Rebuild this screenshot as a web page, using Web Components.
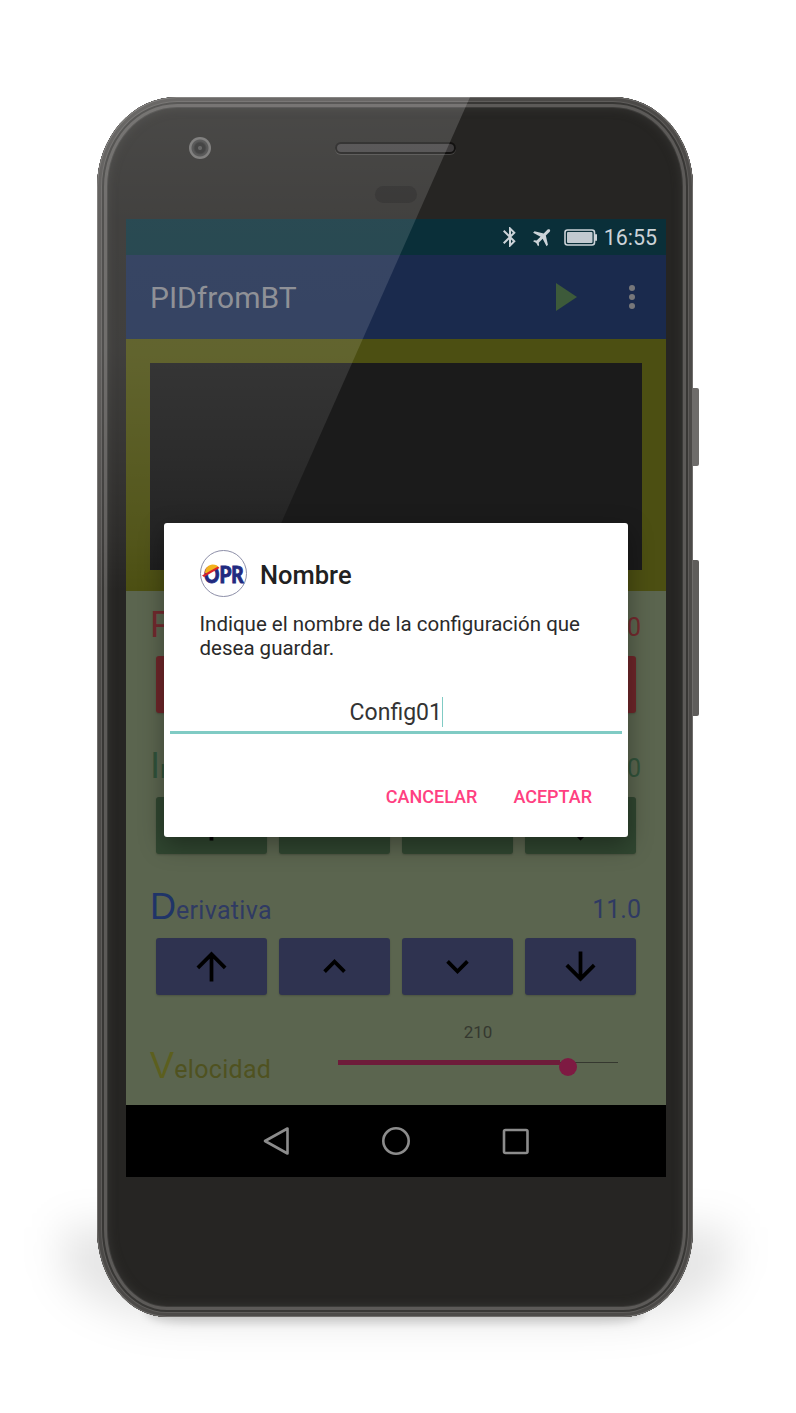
<!DOCTYPE html>
<html lang="es">
<head>
<meta charset="utf-8">
<title>PIDfromBT</title>
<style>
  html, body { margin: 0; padding: 0; background: #fff; }
  body { width: 796px; height: 1413px; overflow: hidden; font-family: Roboto, sans-serif; }
</style>
</head>
<body>
<phone-device>
  <status-strip></status-strip>
  <title-strip title-text="PIDfromBT"></title-strip>
  <chart-panel></chart-panel>
  <control-panel>
    <gain-row letter="P" rest="" value="0" tint="#732a2e" fill="#6e2629"></gain-row>
    <gain-row letter="I" rest="ntegral" value="0" tint="#31523a" fill="#304630"></gain-row>
    <gain-row letter="D" rest="erivativa" value="11.0" tint="#2f3a63" lead="#1f3468" fill="#2f3350"></gain-row>
    <speed-row></speed-row>
  </control-panel>
  <nav-strip></nav-strip>
  <name-dialog slot="dialog"></name-dialog>
</phone-device>

<script>
class phoneDevice extends HTMLElement {
  constructor() {
    super();
    const template = document.createElement('template');
    template.innerHTML = `
      <style>
        :host { display: block; position: relative; width: 596px; height: 1220px; margin: 97px 0 0 97px; }
        .shadow {
          position: absolute; left: -34px; right: -36px; top: 1130px; bottom: -4px;
          border-radius: 0 0 130px 130px / 0 0 60px 60px;
          background: rgba(0,0,0,.1); filter: blur(20px);
        }
        .shadow.near {
          left: 50px; right: 50px; top: 1200px; bottom: -6px;
          border-radius: 0 0 40px 40px / 0 0 10px 10px;
          background: rgba(0,0,0,.16); filter: blur(4px);
        }
        .key { position: absolute; left: 594px; width: 8px; background: #6e6c6a; border-radius: 0 2px 2px 0; }
        .key.power { top: 291px; height: 78px; }
        .key.volume { top: 463px; height: 156px; background: #5f5d5b; }
        .shell {
          position: relative; box-sizing: border-box; height: 100%;
          padding: 0 27px 0 29px;
          border-radius: 80px 80px 70px 70px / 90px 90px 88px 88px;
          background: #262523;
          overflow: hidden;
          box-shadow:
            inset 0 0 0 1px #6f6d6b, inset 0 0 0 4px #4c4a48, inset 0 0 0 5px #5e5c5a,
            inset 0 0 0 7px #383735, inset 0 0 0 10px #5c5a58, inset 0 0 0 11px #3c3b39,
            inset 0 0 10px 11px #363533;
        }
        .bezel {
          display: grid; box-sizing: border-box; height: 122px; padding-top: 40px;
          margin: 0 -27px 0 -29px;
          grid-template-columns: 92px 22px 124px 121px 1fr;
          grid-template-rows: 22px 17px; row-gap: 27px;
        }
        .camera {
          grid-column: 2; width: 22px; height: 22px; border-radius: 50%;
          background: radial-gradient(circle, #4c4c4c 0 1.5px, #242424 2.5px 5px, #3d3d3d 7px 8px, #6b6a69 9px 11px);
        }
        .speaker {
          grid-column: 4; align-self: center; height: 12px; box-sizing: border-box;
          border-radius: 6px; border: 2px solid #121110; background: #3d3b3c;
          box-shadow: 0 1px 0 rgba(255,255,255,.14);
        }
        .sensor { grid-column: 4; grid-row: 2; justify-self: center; width: 42px; height: 17px; border-radius: 9px; background: #1c1b1a; }
        .screen { display: flex; flex-direction: column; height: 958px; position: relative; }
        .glare {
          position: absolute; inset: 0; pointer-events: none;
          clip-path: polygon(0 0, 373px 0, 154px 494px, 0 494px);
          background: linear-gradient(to bottom,
            rgba(255,255,255,.17) 0, rgba(255,255,255,.13) 122px, rgba(255,255,255,.12) 250px,
            rgba(255,255,255,.04) 440px, rgba(255,255,255,0) 494px);
        }
      </style>
      <div class="shadow"></div>
      <div class="shadow near"></div>
      <div class="key power"></div>
      <div class="key volume"></div>
      <div class="shell">
        <div class="bezel">
          <div class="camera"></div>
          <div class="speaker"></div>
          <div class="sensor"></div>
        </div>
        <div class="screen"><slot></slot></div>
        <div class="glare"></div>
        <slot name="dialog"></slot>
      </div>`;
    this.attachShadow({ mode: 'open' });
    this.shadowRoot.appendChild(template.content.cloneNode(true));
  }
}
customElements.define('phone-device', phoneDevice);

class statusStrip extends HTMLElement {
  constructor() {
    super();
    this.attachShadow({ mode: 'open' });
    this.shadowRoot.innerHTML = `
      <style>
        :host { display: flex; align-items: center; justify-content: flex-end; height: 36px; background: #0a2f39; color: #ccd3d8; padding-right: 9px; }
        svg { display: block; fill: currentColor; }
        .bt { margin-right: 9px; }
        .plane { margin-right: 9px; }
        .battery { margin-right: 7px; }
        span { font: 400 21.4px Roboto, sans-serif; }
      </style>
      <svg class="bt" width="24" height="24" viewBox="0 0 24 24"><path d="M17.71 7.71L12 2h-1v7.59L6.41 5 5 6.41 10.59 12 5 17.59 6.41 19 11 14.41V22h1l5.71-5.71-4.3-4.29 4.3-4.29zM13 5.83l1.88 1.88L13 9.59V5.83zm1.88 10.46L13 18.17v-3.76l1.88 1.88z"/></svg>
      <svg class="plane" width="24" height="24" viewBox="0 0 24 24"><path transform="rotate(45 12 12)" d="M21 16v-2l-8-5V3.5c0-.83-.67-1.5-1.5-1.5S10 2.67 10 3.5V9l-8 5v2l8-2.5V19l-2 1.5V22l3.5-1 3.5 1v-1.5L13 19v-5.5l8 2.5z"/></svg>
      <svg class="battery" width="33" height="17" viewBox="0 0 33 17"><rect x="1" y="1" width="29.5" height="15" rx="2.5" fill="none" stroke="currentColor" stroke-width="1.6"/><rect x="3" y="3" width="25.5" height="11" rx="1" opacity=".95"/><rect x="31" y="5" width="2" height="7" rx="1"/></svg>
      <span>16:55</span>`;
  }
}
customElements.define('status-strip', statusStrip);

class titleStrip extends HTMLElement {
  constructor() {
    super();
    this.attachShadow({ mode: 'open' });
    this.shadowRoot.innerHTML = `
      <style>
        :host { display: flex; align-items: center; height: 84px; background: #1a2a4d; padding: 0 24px; }
        h1 { flex: 1; margin: 0; font: 400 30px Roboto, sans-serif; color: #7f8188; }
        svg { display: block; }
        .play { margin-right: 52px; }
        .more { margin-right: 7px; }
      </style>
      <h1></h1>
      <svg class="play" width="21" height="28" viewBox="0 0 21 28"><path d="M0 0l21 14L0 28z" fill="#3d5a3a"/></svg>
      <svg class="more" width="6" height="24" viewBox="0 0 6 24" fill="#77777a"><circle cx="3" cy="3" r="3"/><circle cx="3" cy="12" r="3"/><circle cx="3" cy="21" r="3"/></svg>`;
    this.shadowRoot.querySelector('h1').textContent = this.getAttribute('title-text');
  }
}
customElements.define('title-strip', titleStrip);

class chartPanel extends HTMLElement {
  constructor() {
    super();
    this.attachShadow({ mode: 'open' });
    this.shadowRoot.innerHTML = `
      <style>
        :host { display: block; box-sizing: border-box; height: 252px; padding: 24px 24px 21px; background: #4c4f12; }
        div { height: 100%; background: #1b1b1b; }
      </style>
      <div></div>`;
  }
}
customElements.define('chart-panel', chartPanel);

class controlPanel extends HTMLElement {
  constructor() {
    super();
    this.attachShadow({ mode: 'open' });
    this.shadowRoot.innerHTML = `
      <style>
        :host { display: block; box-sizing: border-box; height: 514px; padding-top: 13px; background: #5b654f; }
      </style>
      <slot></slot>`;
  }
}
customElements.define('control-panel', controlPanel);

const stepIcons = [
  'M4 12l1.41 1.41L11 7.83V20h2V7.83l5.58 5.59L20 12l-8-8-8 8z',
  'M12 8l-6 6 1.41 1.41L12 10.83l4.59 4.58L18 14z',
  'M16.59 8.59L12 13.17 7.41 8.59 6 10l6 6 6-6z',
  'M20 12l-1.41-1.41L13 16.17V4h-2v12.17l-5.58-5.59L4 12l8 8 8-8z'
];

class gainRow extends HTMLElement {
  constructor() {
    super();
    this.attachShadow({ mode: 'open' });
    const tint = this.getAttribute('tint');
    const lead = this.getAttribute('lead') || tint;
    const fill = this.getAttribute('fill');
    this.shadowRoot.innerHTML = `
      <style>
        :host { display: block; height: 141px; }
        .head { display: flex; align-items: baseline; justify-content: space-between; height: 52px; box-sizing: border-box; padding: 0 25px 0 24px; color: ${tint}; font: 400 25px Roboto, sans-serif; }
        .lead { font: 400 36px "Liberation Sans", sans-serif; color: ${lead}; }
        .name { letter-spacing: .3px; }
        .num { position: relative; top: -1px; }
        .steps { display: grid; grid-template-columns: repeat(4, 111px); gap: 12px; padding-left: 30px; }
        .steps div { display: flex; align-items: center; justify-content: center; height: 57px; background: ${fill}; border-radius: 3px; box-shadow: 0 1px 2px rgba(0,0,0,.18); }
        svg { display: block; fill: #000; }
      </style>
      <div class="head">
        <span><span class="lead">${this.getAttribute('letter')}</span><span class="name">${this.getAttribute('rest')}</span></span>
        <span class="num">${this.getAttribute('value')}</span>
      </div>
      <div class="steps">
        ${stepIcons.map((d) => `<div><svg width="45" height="45" viewBox="0 0 24 24"><path d="${d}"/></svg></div>`).join('')}
      </div>`;
  }
}
customElements.define('gain-row', gainRow);

class speedRow extends HTMLElement {
  constructor() {
    super();
    this.attachShadow({ mode: 'open' });
    this.shadowRoot.innerHTML = `
      <style>
        :host { display: flex; align-items: flex-end; height: 72px; margin-top: 1px; padding: 0 0 0 24px; font-family: Roboto, sans-serif; }
        .label { width: 188px; padding-bottom: 13px; color: #4f5220; font-size: 25px; letter-spacing: .3px; }
        .lead { font: 400 36px "Liberation Sans", sans-serif; color: #5c5f1e; }
        .slider { position: relative; width: 280px; height: 72px; }
        .value { display: block; text-align: center; font-size: 17px; line-height: 20px; color: #35382f; margin-top: -6px; }
        .rail { position: absolute; left: 0; right: 0; top: 34px; height: 1px; background: #35382f; }
        .done { position: absolute; left: 0; width: 222px; top: 32px; height: 5px; background: #6e1c3a; }
        .thumb { position: absolute; left: 221px; top: 37px; width: 18px; height: 18px; margin-top: -7px; border-radius: 50%; background: #7e1a42; }
      </style>
      <div class="label"><span class="lead">V</span>elocidad</div>
      <div class="slider">
        <span class="value">210</span>
        <div class="rail"></div><div class="done"></div><div class="thumb"></div>
      </div>`;
  }
}
customElements.define('speed-row', speedRow);

class navStrip extends HTMLElement {
  constructor() {
    super();
    this.attachShadow({ mode: 'open' });
    this.shadowRoot.innerHTML = `
      <style>
        :host { display: flex; align-items: center; justify-content: center; gap: 91px; height: 72px; background: #000; }
        svg { display: block; fill: none; stroke: #8c8c8c; stroke-width: 2.6; stroke-linejoin: round; }
      </style>
      <svg width="28" height="30" viewBox="0 0 28 30"><path d="M24.500 2.500v25L2 15z"/></svg>
      <svg width="28" height="30" viewBox="0 0 28 30"><circle cx="14" cy="15" r="12.7"/></svg>
      <svg width="28" height="30" viewBox="0 0 28 30"><rect x="3" y="4" width="23.5" height="23" rx="1.5"/></svg>`;
  }
}
customElements.define('nav-strip', navStrip);

class oprLogo extends HTMLElement {
  constructor() {
    super();
    this.attachShadow({ mode: 'open' });
    this.shadowRoot.innerHTML = `
      <style>
        :host { display: block; width: 47px; height: 47px; flex: none; }
        svg { display: block; }
        text { font: 900 19px Lato, "Liberation Sans", sans-serif; fill: #1f2a80; stroke: #1f2a80; stroke-width: .8; }
      </style>
      <svg width="47" height="47" viewBox="0 0 47 47">
        <circle cx="23.500" cy="23.500" r="23" fill="#fff" stroke="#8d8fa8"/>
        <text transform="translate(4 33) scale(1 1.150)">OPR</text>
        <path d="M5 23c0-5 4-8.500 7.500-8.500s5.500 1 6 3L8 24z" fill="#f2b21c"/>
        <path d="M2 25.500L18 16.500l1.500 1.500L4 27z" fill="#d8232a"/>
      </svg>`;
  }
}
customElements.define('opr-logo', oprLogo);

class nameDialog extends HTMLElement {
  constructor() {
    super();
    this.attachShadow({ mode: 'open' });
    this.shadowRoot.innerHTML = `
      <style>
        :host { display: block; position: absolute; left: 67px; top: 426px; width: 464px; height: 314px; box-sizing: border-box; padding: 27px 6px 0; background: #fff; border-radius: 3px; box-shadow: 0 8px 24px rgba(0,0,0,.35); font-family: Roboto, sans-serif; color: #212121; }
        .head { display: flex; align-items: center; gap: 13px; padding-left: 30px; }
        h2 { margin: 0; padding-top: 3px; font: 500 25.500px Roboto, sans-serif; }
        p { margin: 15px 30px 0 29.5px; font-size: 20.5px; line-height: 24px; color: #2a2a2a; }
        .field { display: flex; align-items: center; justify-content: center; height: 38px; margin-top: 29px; padding: 4px 0 0 1px; border-bottom: 3px solid #80cbc4; font-size: 23px; color: #333; }
        .caret { width: 1.5px; height: 30px; background: #80cbc4; }
        .actions { display: flex; justify-content: flex-end; gap: 36px; margin-top: 52px; padding-right: 30px; font: 500 18px Roboto, sans-serif; color: #ff4081; }
      </style>
      <div class="head"><opr-logo></opr-logo><h2>Nombre</h2></div>
      <p>Indique el nombre de la configuración que desea guardar.</p>
      <div class="field"><span>Config01</span><i class="caret"></i></div>
      <div class="actions"><span>CANCELAR</span><span>ACEPTAR</span></div>`;
  }
}
customElements.define('name-dialog', nameDialog);
</script>
</body>
</html>
